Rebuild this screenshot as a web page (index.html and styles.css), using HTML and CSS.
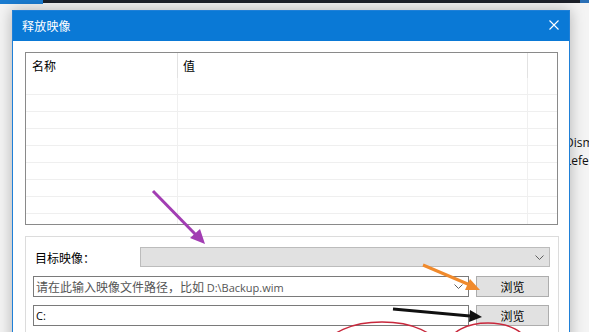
FILE: index.html
```html
<!DOCTYPE html>
<html lang="zh-CN">
<head>
<meta charset="utf-8">
<title>释放映像</title>
<link rel="stylesheet" href="styles.css">
</head>
<body>
<div class="desktop">
  <div class="topstrip"><span class="ts-blue"></span><span class="ts-dark"></span><span class="ts-blue2"></span></div>
  <div class="bgtext">Dism<br>Lefe</div>
  <div class="dialog">
    <div class="titlebar">
      <span class="title">释放映像</span>
      <svg class="close" width="10" height="10" viewBox="0 0 10 10"><path d="M0.5 0.5L9.5 9.5M9.5 0.5L0.5 9.5" stroke="#fff" stroke-width="1.1" fill="none"/></svg>
    </div>
    <div class="body">
      <div class="listview">
        <div class="lv-header">
          <div class="cell c1">名称</div><div class="cell c2">值</div><div class="cell c3"></div>
        </div>
        <div class="lv-row"><div class="cell c1"></div><div class="cell c2"></div><div class="cell c3"></div></div>
        <div class="lv-row"><div class="cell c1"></div><div class="cell c2"></div><div class="cell c3"></div></div>
        <div class="lv-row"><div class="cell c1"></div><div class="cell c2"></div><div class="cell c3"></div></div>
        <div class="lv-row"><div class="cell c1"></div><div class="cell c2"></div><div class="cell c3"></div></div>
        <div class="lv-row"><div class="cell c1"></div><div class="cell c2"></div><div class="cell c3"></div></div>
        <div class="lv-row"><div class="cell c1"></div><div class="cell c2"></div><div class="cell c3"></div></div>
        <div class="lv-row"><div class="cell c1"></div><div class="cell c2"></div><div class="cell c3"></div></div>
        <div class="lv-row"><div class="cell c1"></div><div class="cell c2"></div><div class="cell c3"></div></div>
        <div class="lv-row"><div class="cell c1"></div><div class="cell c2"></div><div class="cell c3"></div></div>
      </div>
      <div class="group">
        <div class="row r1">
          <span class="label">目标映像：</span>
          <div class="combo disabled">
            <svg class="chev" width="9" height="5" viewBox="0 0 9 5"><path d="M0.5 0.5L4.5 4.5L8.5 0.5" stroke="#606060" fill="none"/></svg>
          </div>
        </div>
        <div class="row r2">
          <div class="combo edit">
            <span class="ph">请在此输入映像文件路径，比如 <span class="latin">D:\Backup.wim</span></span>
            <svg class="chev" width="9" height="5" viewBox="0 0 9 5"><path d="M0.5 0.5L4.5 4.5L8.5 0.5" stroke="#606060" fill="none"/></svg>
          </div>
          <button class="btn">浏览</button>
        </div>
        <div class="row r3">
          <div class="textbox"><span class="latin dark">C:</span></div>
          <button class="btn">浏览</button>
        </div>
      </div>
    </div>
  </div>
  <svg class="annot" width="589" height="332" viewBox="0 0 589 332">
    <line x1="153" y1="191" x2="197" y2="236" stroke="#a23db3" stroke-width="3"/>
    <polygon points="205,244 190,238 200,229" fill="#a23db3"/>
    <line x1="423" y1="265" x2="470" y2="285" stroke="#f08a2c" stroke-width="3"/>
    <polygon points="480,290 465,290 470,279" fill="#f08a2c"/>
    <line x1="393" y1="309" x2="470" y2="316" stroke="#111" stroke-width="3"/>
    <polygon points="482,317 469,322 470,310" fill="#111"/>
    <ellipse cx="382" cy="347" rx="55" ry="25" fill="none" stroke="#c8283c" stroke-width="1.5"/>
    <ellipse cx="488" cy="343" rx="38" ry="20" fill="none" stroke="#c8283c" stroke-width="1.5"/>
  </svg>
</div>
</body>
</html>
```
FILE: styles.css
```css
* { box-sizing: border-box; }
html, body { margin: 0; padding: 0; }
body {
  width: 589px;
  height: 332px;
  overflow: hidden;
  background: #f3f3f3;
  font-family: "Noto Sans CJK SC", "Noto Sans", sans-serif;
  font-size: 12px;
  color: #000;
}
.desktop {
  position: relative;
  width: 589px;
  height: 332px;
  overflow: hidden;
  background: #f4f4f4;
}
.topstrip {
  display: flex;
  height: 4px;
}
.ts-blue { width: 43px; height: 4px; background: #1a7bd0; }
.ts-dark { width: 537px; height: 3px; background: #1c2029; }
.ts-blue2 { flex: 1; height: 3px; background: #2a6fb5; }

.bgtext {
  position: absolute;
  left: 565px;
  top: 134px;
  font-family: "Open Sans", "Noto Sans", sans-serif;
  font-size: 12px;
  line-height: 18px;
  color: #111;
}

.dialog {
  position: absolute;
  left: 12px;
  top: 10px;
  width: 558px;
  height: 340px;
  background: #fff;
  border: 1px solid #1f80d8;
  box-shadow: 0 0 14px rgba(0,0,0,0.28);
  display: flex;
  flex-direction: column;
}
.titlebar {
  height: 30px;
  flex: none;
  background: #0a79d6;
  display: flex;
  align-items: center;
  justify-content: space-between;
  padding: 0 10px 1px 9px;
}
.title {
  color: #fff;
  font-size: 12px;
  letter-spacing: 0.2px;
}
.close { display: block; margin-top: -1px; }

.body {
  padding: 11px 11px 0 12px;
  display: flex;
  flex-direction: column;
}
.listview {
  height: 173px;
  border: 1px solid #8a8a8a;
  overflow: hidden;
}
.lv-header, .lv-row {
  display: flex;
}
.lv-header { height: 25px; }
.lv-row { height: 17px; border-bottom: 1px solid #efefef; }
.cell { flex: none; }
.c1 { width: 152px; }
.c2 { width: 350px; }
.c3 { flex: 1; }
.lv-header .c1, .lv-header .c2 {
  border-right: 1px solid #e2e2e2;
  padding: 5px 0 0 6px;
  line-height: 16px;
}
.lv-header .c2 { padding-left: 5px; }
.lv-row .c1, .lv-row .c2 { border-right: 1px solid #f0f0f0; }

.group {
  margin-top: 11px;
  margin-right: -1px;
  height: 110px;
  border: 1px solid #dcdcdc;
  padding: 10px 8px 0 7px;
  display: flex;
  flex-direction: column;
}
.row { display: flex; align-items: center; }
.r1 { height: 20px; }
.r2 { height: 21px; margin-top: 9px; }
.r3 { height: 21px; margin-top: 8px; }
.label {
  width: 107px;
  padding-left: 2px;
  font-size: 12px;
  color: #000;
  flex: none;
}
.combo {
  height: 100%;
  display: flex;
  align-items: center;
  justify-content: space-between;
}
.combo.disabled {
  flex: 1;
  background: #e1e1e1;
  border: 1px solid #bcbcbc;
  justify-content: flex-end;
  padding-right: 5px;
}
.combo.edit, .textbox {
  width: 436px;
  flex: none;
  height: 100%;
  background: #fff;
  border: 1px solid #7a7a7a;
  padding: 0 5px 0 2px;
}
.combo.edit .chev { margin-right: 0; }
.textbox {
  display: flex;
  align-items: center;
}
.ph { color: #555; font-size: 12px; white-space: nowrap; }
.latin {
  font-family: "Open Sans", "Noto Sans", sans-serif;
  font-size: 11px;
}
.dark { color: #000; }
.chev { display: block; }
.btn {
  margin: 0 0 0 7px;
  width: 73px;
  height: 100%;
  flex: none;
  background: #e1e1e1;
  border: 1px solid #adadad;
  font-family: "Noto Sans CJK SC", sans-serif;
  font-size: 12px;
  color: #000;
  padding: 0;
  line-height: 1;
}

.annot {
  position: absolute;
  left: 0;
  top: 0;
}
```
